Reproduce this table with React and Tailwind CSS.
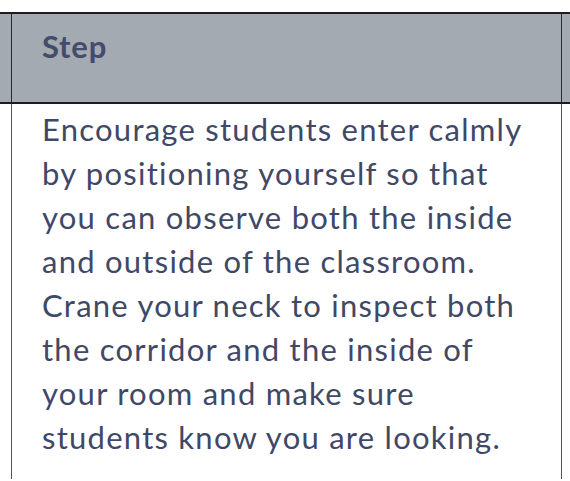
import React from 'react'

const lines = [
  'Encourage students enter calmly',
  'by positioning yourself so that',
  'you can observe both the inside',
  'and outside of the classroom.',
  'Crane your neck to inspect both',
  'the corridor and the inside of',
  'your room and make sure',
  'students know you are looking.',
]

const App = () => {
  return (
    <div className="w-[570px] h-[481px] bg-white overflow-hidden pt-3" style={{ fontFamily: 'Lato, "Open Sans", sans-serif' }}>
      {/* Header row */}
      <div className="flex h-[92px] border-t-2 border-b-2 border-[#1c1c1c] bg-[#a3aab1]">
        <div className="w-[11px] shrink-0" />
        <div className="w-[551px] shrink-0 border-l border-r border-[#2a2a2a] pl-[30px] pt-[10px]">
          <span className="text-[31px] leading-[44px] font-bold tracking-[0.8px] text-[#454b6c]">Step</span>
        </div>
        <div className="flex-1" />
      </div>

      {/* Body row */}
      <div className="flex h-[375px]">
        <div className="w-[11px] shrink-0" />
        <div className="w-[551px] shrink-0 border-l border-r border-[#555] pl-[30px] pt-[3px]">
          <p className="text-[31px] leading-[44px] tracking-[1.25px] text-[#3f4866]">
            {lines.map((l, i) => (
              <span key={i} className="block whitespace-nowrap">{l}</span>
            ))}
          </p>
        </div>
        <div className="flex-1" />
      </div>
    </div>
  )
}

export default App
